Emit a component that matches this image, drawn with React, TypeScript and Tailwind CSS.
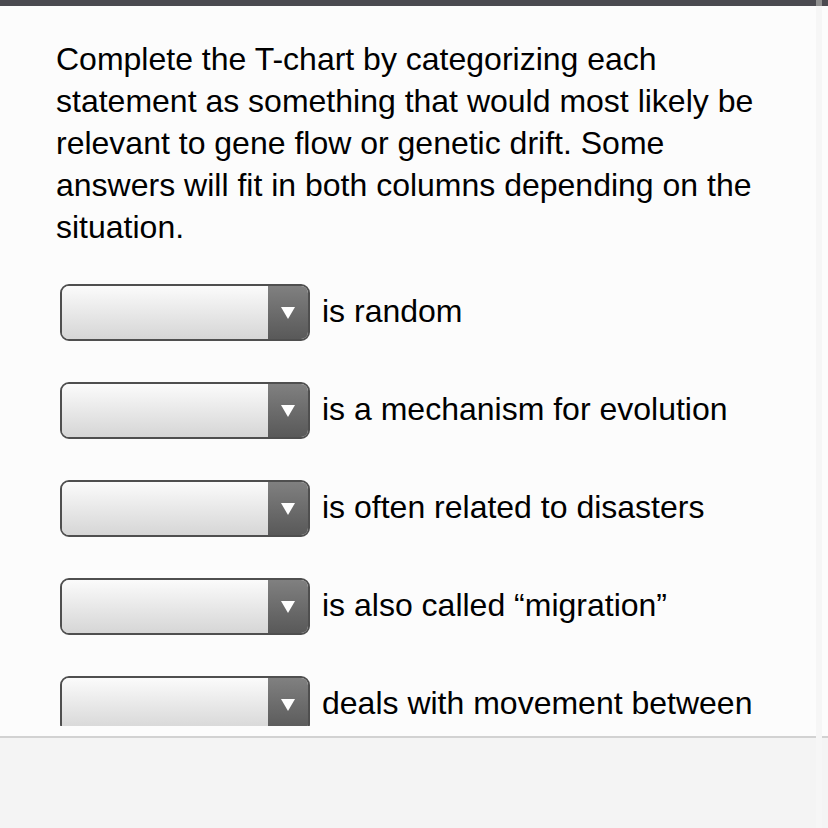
import React from 'react';

const statements = [
  'is random',
  'is a mechanism for evolution',
  'is often related to disasters',
  'is also called \u201cmigration\u201d',
  'deals with movement between',
];

function Dropdown() {
  return (
    <div className="flex h-[57px] w-[250px] shrink-0 overflow-hidden rounded-[9px] border-2 border-[#4f4f4f]">
      <div className="flex-1 bg-gradient-to-b from-[#fbfbfb] to-[#d6d6d6]" />
      <div className="flex w-[40px] items-center justify-center bg-gradient-to-b from-[#808080] to-[#595959]">
        <svg width="14" height="12" viewBox="0 0 14 12">
          <path d="M0 0 L14 0 L7 12 Z" fill="#ffffff" />
        </svg>
      </div>
    </div>
  );
}

export default function App() {
  return (
    <div
      className="relative flex h-[828px] w-[828px] flex-col overflow-hidden bg-[#fcfcfc] text-black"
      style={{ fontFamily: '"Liberation Sans", Arial, sans-serif' }}
    >
      <div className="h-[6px] w-full shrink-0 bg-[#4b4a50]" />
      <div className="h-[720px] shrink-0 overflow-hidden pl-[56px] pt-[32px]">
        <p className="w-[715px] text-[32px] leading-[42px]">
          Complete the T-chart by categorizing each statement as something that would most likely be
          relevant to gene flow or genetic drift. Some answers will fit in both columns depending on the
          situation.
        </p>
        <div className="mt-[36px] flex flex-col gap-[41px] pl-[4px]">
          {statements.map((s) => (
            <div key={s} className="flex items-center gap-[12px]">
              <Dropdown />
              <span className="mb-[3px] whitespace-nowrap text-[32px] leading-[42px]">{s}</span>
            </div>
          ))}
        </div>
      </div>
      <div className="h-[10px] shrink-0 bg-[#fcfcfc]" />
      <div className="h-[2px] shrink-0 bg-[#d2d2d2]" />
      <div className="flex-1 bg-[#f4f4f4]" />
      <div className="absolute right-[6px] top-0 h-full w-[6px] bg-[#f6f6f6]" />
      <div className="absolute right-[6px] top-0 h-[6px] w-[6px] bg-[#8e8e8e]" />
    </div>
  );
}
